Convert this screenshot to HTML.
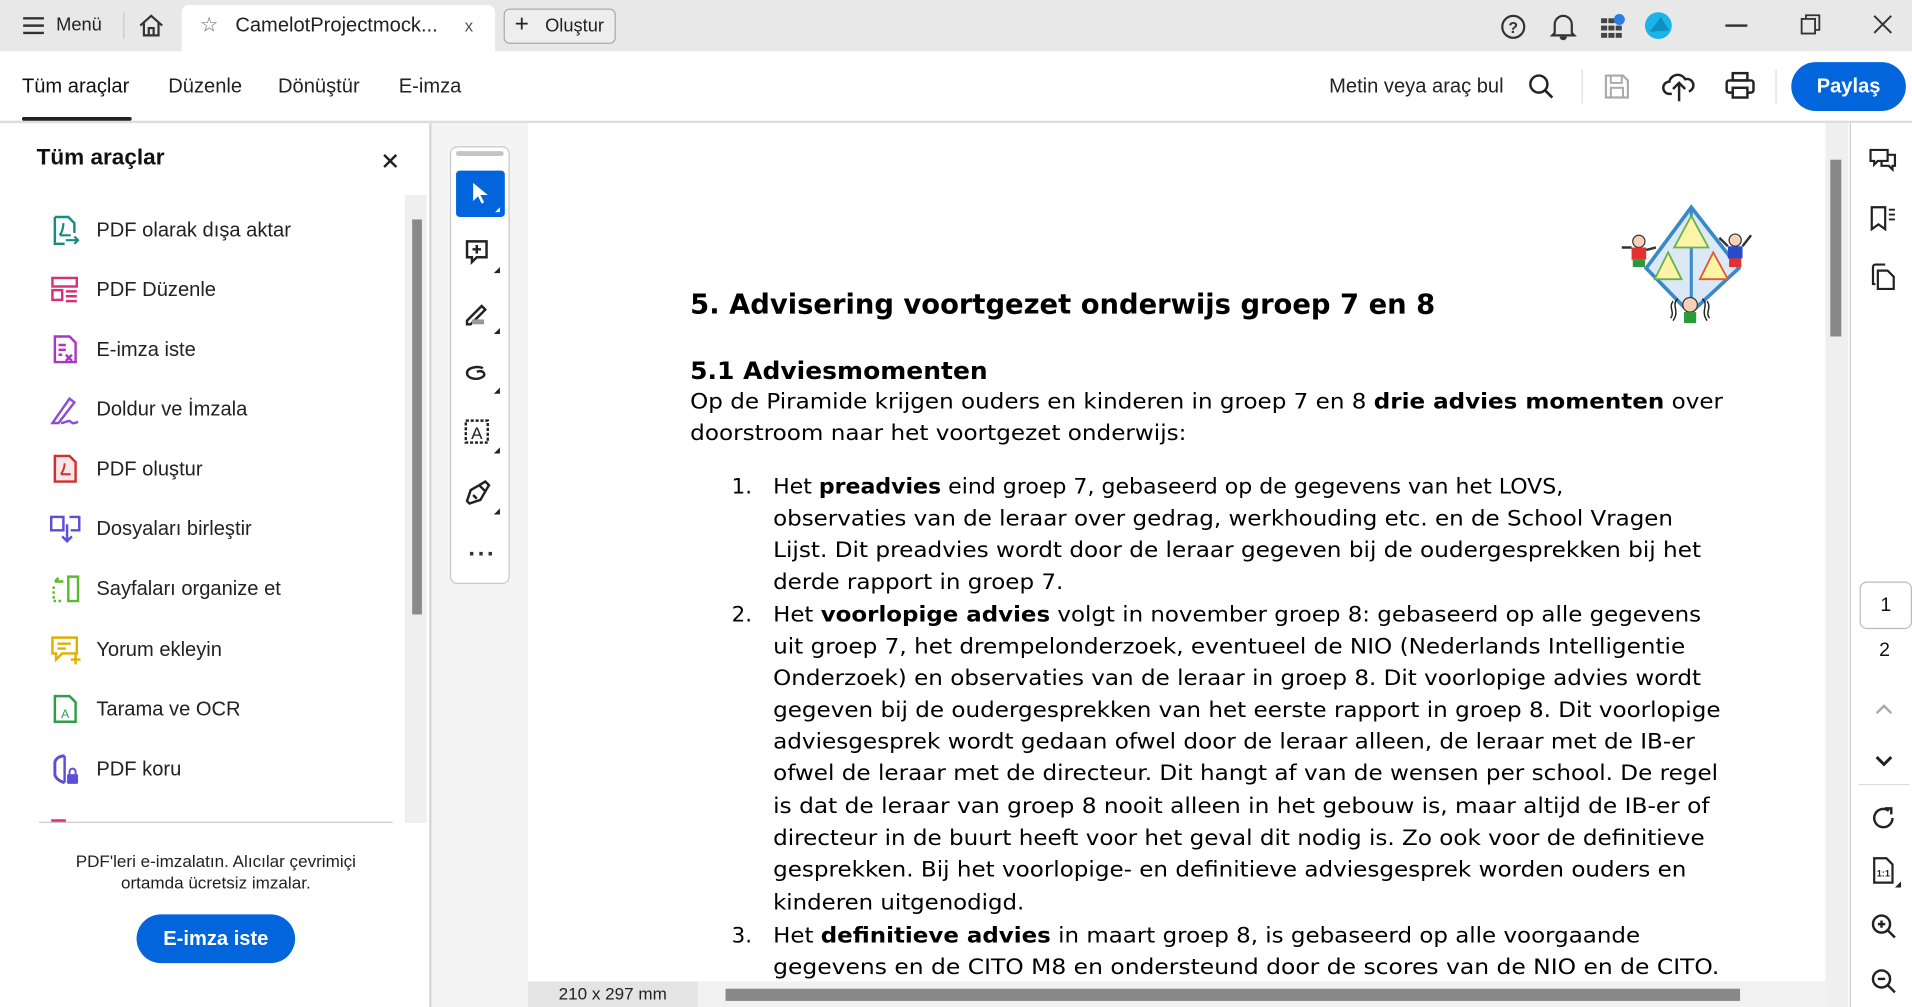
<!DOCTYPE html>
<html><head><meta charset="utf-8"><style>
html,body{margin:0;padding:0;width:1912px;height:1007px;overflow:hidden;background:#fff}
#s{position:absolute;left:0;top:0;width:1568px;height:826px;transform:scale(1.21939,1.21913);transform-origin:0 0;font-family:"Liberation Sans",Arial,sans-serif;color:#222;overflow:hidden}
.a{position:absolute}
.t{font-size:16px;color:#222;white-space:nowrap}
.li{position:absolute;left:40px;width:30px;height:30px}
.lt{position:absolute;left:79px;font-size:16.5px;color:#222;white-space:nowrap}
</style></head><body><div id="s">
<!-- title bar -->
<div class="a" style="left:0;top:0;width:1568px;height:42px;background:#e8e8e8"></div>
<svg class="a" style="left:18px;top:13px" width="20" height="16"><path d="M1 2h17M1 8h17M1 14h17" stroke="#333" stroke-width="2"/></svg>
<div class="a t" style="left:46px;top:12px;font-size:15px">Menü</div>
<div class="a" style="left:101px;top:10px;width:1px;height:22px;background:#c8c8c8"></div>
<svg class="a" style="left:113px;top:11px" width="22" height="20"><path d="M2 10L11 2L20 10M5 8v10h12V8M9 18v-6h4v6" fill="none" stroke="#333" stroke-width="1.8"/></svg>
<div class="a" style="left:149px;top:4px;width:257px;height:38px;background:#fff;border-radius:6px 6px 0 0"></div>
<div class="a t" style="left:164px;top:11px;font-size:17px;color:#666">☆</div>
<div class="a t" style="left:193px;top:12px;font-size:16.5px;color:#222">CamelotProjectmock...</div>
<div class="a t" style="left:381px;top:13px;font-size:14px;color:#555">x</div>
<div class="a" style="left:413px;top:7px;width:90px;height:27px;border:1.5px solid #aaa;border-radius:5px;background:#eee"></div>
<div class="a t" style="left:422px;top:9px;font-size:20px">+</div>
<div class="a t" style="left:447px;top:13px;font-size:15px">Oluştur</div>
<svg class="a" style="left:1230px;top:11px" width="22" height="22"><circle cx="11" cy="11" r="9" fill="none" stroke="#333" stroke-width="1.8"/><text x="11" y="16" font-size="13" text-anchor="middle" font-family="Liberation Sans" font-weight="bold" fill="#333">?</text></svg>
<svg class="a" style="left:1271px;top:10px" width="22" height="24"><path d="M4 17V10a7 7 0 0 1 14 0v7l2 2H2z" fill="none" stroke="#333" stroke-width="1.8"/><path d="M8 20a3 3 0 0 0 6 0" fill="#333"/></svg>
<svg class="a" style="left:1312px;top:11px" width="22" height="22"><g fill="#444"><rect x="1" y="4" width="5" height="4"/><rect x="7" y="4" width="5" height="4"/><rect x="1" y="10" width="5" height="4"/><rect x="7" y="10" width="5" height="4"/><rect x="13" y="10" width="5" height="4"/><rect x="1" y="16" width="5" height="4"/><rect x="7" y="16" width="5" height="4"/><rect x="13" y="16" width="5" height="4"/></g><circle cx="16" cy="5" r="4.5" fill="#2a7de1"/></svg>
<svg class="a" style="left:1348px;top:9px" width="24" height="24"><circle cx="12" cy="12" r="11" fill="#1bb4e8"/><path d="M5 17L14 5L21 16z" fill="#0e8fc4"/></svg>
<div class="a" style="left:1415px;top:20px;width:18px;height:2px;background:#333"></div>
<svg class="a" style="left:1476px;top:11px" width="18" height="18"><rect x="1.5" y="4.5" width="11" height="12" fill="none" stroke="#333" stroke-width="1.5"/><path d="M5 4.5V1.5h11v12h-3.5" fill="none" stroke="#333" stroke-width="1.5"/></svg>
<svg class="a" style="left:1536px;top:12px" width="16" height="16"><path d="M1 1L15 15M15 1L1 15" stroke="#333" stroke-width="1.6"/></svg>
<!-- toolbar -->
<div class="a" style="left:0;top:99px;width:1568px;height:2px;background:#ddd"></div>
<div class="a t" style="left:18px;top:62px;font-size:16.5px;color:#111">Tüm araçlar</div>
<div class="a" style="left:18px;top:96px;width:90px;height:3px;background:#222;border-radius:2px"></div>
<div class="a t" style="left:138px;top:62px;font-size:16.5px">Düzenle</div>
<div class="a t" style="left:228px;top:62px;font-size:16.5px">Dönüştür</div>
<div class="a t" style="left:327px;top:62px;font-size:16.5px">E-imza</div>
<div class="a t" style="left:1090px;top:62px;font-size:16.5px">Metin veya araç bul</div>
<svg class="a" style="left:1253px;top:60px" width="22" height="22"><circle cx="9" cy="9" r="7" fill="none" stroke="#222" stroke-width="2"/><path d="M14 14l6 6" stroke="#222" stroke-width="2.2"/></svg>
<div class="a" style="left:1297px;top:57px;width:1px;height:28px;background:#ddd"></div>
<svg class="a" style="left:1315px;top:60px" width="22" height="22"><path d="M2 2h14l4 4v14H2z" fill="none" stroke="#aaa" stroke-width="1.8"/><rect x="6" y="2" width="9" height="6" fill="none" stroke="#aaa" stroke-width="1.6"/><rect x="6" y="12" width="10" height="8" fill="none" stroke="#aaa" stroke-width="1.6"/></svg>
<svg class="a" style="left:1363px;top:57px" width="28" height="28"><path d="M8 20H6a5 5 0 0 1 0-10 7 7 0 0 1 13-2 5 5 0 0 1 3 10" fill="none" stroke="#222" stroke-width="2"/><path d="M14 26V12M9 16l5-5 5 5" fill="none" stroke="#222" stroke-width="2"/></svg>
<svg class="a" style="left:1414px;top:58px" width="26" height="26"><rect x="7" y="2" width="12" height="6" fill="none" stroke="#222" stroke-width="2"/><rect x="2" y="8" width="22" height="10" rx="2" fill="none" stroke="#222" stroke-width="2"/><rect x="7" y="14" width="12" height="8" fill="#fff" stroke="#222" stroke-width="2"/></svg>
<div class="a" style="left:1456px;top:57px;width:1px;height:28px;background:#ddd"></div>
<div class="a" style="left:1469px;top:51px;width:94px;height:40px;background:#0265dc;border-radius:20px;color:#fff;font-weight:bold;font-size:16.5px;text-align:center;line-height:40px">Paylaş</div>
<!-- left panel -->
<div class="a" style="left:352px;top:101px;width:2px;height:725px;background:#d5d5d5"></div>
<div class="a" style="left:30px;top:118px;font-size:18.5px;font-weight:bold;color:#111;white-space:nowrap">Tüm araçlar</div>
<svg class="a" style="left:314px;top:126px" width="12" height="12"><path d="M1 1L11 11M11 1L1 11" stroke="#222" stroke-width="2"/></svg>
<div class="a" style="left:332px;top:160px;width:18px;height:515px;background:#efefef"></div>
<div class="a" style="left:338px;top:180px;width:8px;height:324px;background:#8a8a8a"></div>
<svg class="li" style="top:175px" viewBox="0 0 30 30"><path d="M5 3h11l5 5v8M5 3v22h8" fill="none" stroke="#1a8a84" stroke-width="2"/><path d="M9 18c2-3 3-7 3-10M9 18h9M14 22h10M21 19l3 3-3 3" fill="none" stroke="#1a8a84" stroke-width="1.8"/></svg>
<div class="lt" style="top:180px">PDF olarak dışa aktar</div>
<svg class="li" style="top:224px" viewBox="0 0 30 30"><g fill="none" stroke="#d4317b" stroke-width="2"><rect x="3" y="4" width="20" height="7"/><rect x="3" y="14" width="8" height="8"/><path d="M14 15h9M14 19h9M14 23h9"/></g></svg>
<div class="lt" style="top:229px">PDF Düzenle</div>
<svg class="li" style="top:273px" viewBox="0 0 30 30"><path d="M5 3h12l5 5v16H5z" fill="none" stroke="#a937c4" stroke-width="2"/><path d="M8 10h6M8 14h6M8 18h3M14 18l5 5M19 18l-5 5" stroke="#a937c4" stroke-width="2"/></svg>
<div class="lt" style="top:278px">E-imza iste</div>
<svg class="li" style="top:322px" viewBox="0 0 30 30"><path d="M3 25L17 5l4 3L8 25zM10 25c4 0 6-3 8-1s3 1 6 0" fill="none" stroke="#8a4fd9" stroke-width="2"/></svg>
<div class="lt" style="top:327px">Doldur ve İmzala</div>
<svg class="li" style="top:371px" viewBox="0 0 30 30"><path d="M5 3h12l5 5v16H5z" fill="#fbe7e7" stroke="#d32f2f" stroke-width="2"/><path d="M10 18c2-3 3-6 3-9M10 18h8" fill="none" stroke="#d32f2f" stroke-width="1.6"/></svg>
<div class="lt" style="top:376px">PDF oluştur</div>
<svg class="li" style="top:420px" viewBox="0 0 30 30"><g fill="none" stroke="#5a4fd6" stroke-width="2"><rect x="2" y="4" width="10" height="11"/><path d="M17 4h8v11h-7M15 10v14M11 20l4 4 4-4"/></g></svg>
<div class="lt" style="top:425px">Dosyaları birleştir</div>
<svg class="li" style="top:469px" viewBox="0 0 30 30"><g fill="none" stroke="#5cb82e" stroke-width="2"><rect x="16" y="4" width="8" height="20"/><path d="M4 12v12h8" stroke-dasharray="2 2"/><path d="M5 8h7M5 8l3-3"/></g></svg>
<div class="lt" style="top:474px">Sayfaları organize et</div>
<svg class="li" style="top:519px" viewBox="0 0 30 30"><g fill="none" stroke="#e0b000" stroke-width="2"><path d="M3 4h20v13H11l-5 5v-5H3z"/><path d="M7 9h11M7 13h7M22 17v9M18 22h8"/></g></svg>
<div class="lt" style="top:524px">Yorum ekleyin</div>
<svg class="li" style="top:568px" viewBox="0 0 30 30"><path d="M5 3h12l5 5v16H5z" fill="none" stroke="#2e9e4a" stroke-width="2"/><text x="13.5" y="21" font-size="10" text-anchor="middle" fill="#2e9e4a" font-family="Liberation Sans">A</text></svg>
<div class="lt" style="top:573px">Tarama ve OCR</div>
<svg class="li" style="top:617px" viewBox="0 0 30 30"><path d="M13 3C8 3 5 6 5 9v9c0 3 4 6 8 7" fill="none" stroke="#5a4fd6" stroke-width="2.4"/><path d="M13 3v22" stroke="#5a4fd6" stroke-width="2"/><rect x="15" y="18" width="9" height="8" rx="1" fill="#5a4fd6"/><path d="M17 18v-2a2.5 2.5 0 0 1 5 0v2" fill="none" stroke="#5a4fd6" stroke-width="1.6"/></svg>
<div class="lt" style="top:622px">PDF koru</div>
<div class="a" style="left:42px;top:672px;width:12px;height:3px;background:#d4317b"></div>
<div class="a" style="left:32px;top:674px;width:290px;height:1px;background:#ccc"></div>
<div class="a" style="left:47px;top:697px;width:260px;text-align:center;font-size:14px;line-height:18px;color:#222">PDF'leri e-imzalatın. Alıcılar çevrimiçi ortamda ücretsiz imzalar.</div>
<div class="a" style="left:112px;top:750px;width:130px;height:40px;background:#0265dc;border-radius:20px;color:#fff;font-weight:bold;font-size:16.5px;text-align:center;line-height:40px">E-imza iste</div>
<!-- tool strip area -->
<div class="a" style="left:354px;top:101px;width:79px;height:725px;background:#f4f4f4"></div>
<div class="a" style="left:369px;top:120px;width:47px;height:357px;background:#fff;border:1.5px solid #c8c8c8;border-radius:6px"></div>
<div class="a" style="left:374px;top:124px;width:39px;height:4px;background:#c4c4c4;border-radius:2px"></div>
<div class="a" style="left:374px;top:140px;width:40px;height:38px;background:#0265dc;border-radius:3px"></div>
<svg class="a" style="left:374px;top:140px" width="40" height="38"><path d="M14 10v15l4-4 3 6 2-1-3-6h6z" fill="#fff"/><path d="M36 30v4h-4z" fill="#fff"/></svg>
<svg class="a" style="left:374px;top:190px" width="40" height="40"><path d="M9 8h16v13H17l-4 4v-4H9z" fill="none" stroke="#222" stroke-width="2"/><path d="M17 11v7M13.5 14.5h7" stroke="#222" stroke-width="2"/><path d="M36 29v5h-5z" fill="#222"/></svg>
<svg class="a" style="left:374px;top:240px" width="40" height="40"><path d="M9 23l12-12 3 3-12 12H9z" fill="none" stroke="#222" stroke-width="2"/><rect x="13" y="22" width="10" height="4" fill="#999"/><path d="M36 29v5h-5z" fill="#222"/></svg>
<svg class="a" style="left:374px;top:289px" width="40" height="40"><path d="M22 13c-3-2-13-1-13 4s9 6 13 3c3-2 0-6-5-4" fill="none" stroke="#222" stroke-width="2"/><path d="M36 29v5h-5z" fill="#222"/></svg>
<svg class="a" style="left:374px;top:338px" width="40" height="40"><rect x="8" y="7" width="18" height="18" fill="none" stroke="#222" stroke-width="2" stroke-dasharray="2.5 1.5"/><text x="17" y="22" font-size="14" text-anchor="middle" font-family="Liberation Sans" fill="#222">A</text><path d="M36 29v5h-5z" fill="#222"/></svg>
<svg class="a" style="left:374px;top:388px" width="40" height="40"><path d="M9 23l3-9 7-4 5 5-4 7-9 3zM14 18l3 3M19 10l5-3 3 3-3 5" fill="none" stroke="#222" stroke-width="2"/><path d="M36 29v5h-5z" fill="#222"/></svg>
<div class="a" style="left:384px;top:444px;font-size:20px;font-weight:bold;color:#333;letter-spacing:1px">···</div>
<!-- document -->
<div class="a" style="left:433px;top:101px;width:1064px;height:704px;background:#fff"></div>
<svg class="a" style="left:1326px;top:165px" width="118" height="110" viewBox="0 0 118 110">
<path d="M61 5L24 55L60 92L100 55z" fill="#dbe9f6" stroke="#3a88c8" stroke-width="3"/>
<path d="M61 5V92" stroke="#3a88c8" stroke-width="2.5"/>
<path d="M61 12L47 38H75z" fill="#fdf4a8" stroke="#6cb04a" stroke-width="1.5"/>
<path d="M42 42L31 64H53z" fill="#fdf4a8" stroke="#6cb04a" stroke-width="1.5"/>
<path d="M79 42L68 64H91z" fill="#fdf4a8" stroke="#e25a2a" stroke-width="1.5"/>
<circle cx="18" cy="33" r="5" fill="#f8d0b8" stroke="#333"/><rect x="12" y="38" width="12" height="10" fill="#e53030"/><rect x="13" y="48" width="10" height="6" fill="#2a9a3a"/><path d="M4 38h8M24 40l8-2" stroke="#333" stroke-width="2"/>
<circle cx="97" cy="32" r="5" fill="#f8d0b8" stroke="#333"/><rect x="91" y="37" width="12" height="10" fill="#2a4ac8"/><rect x="92" y="47" width="10" height="7" fill="#e53030"/><path d="M84 30l7 7M110 28l-7 9" stroke="#333" stroke-width="2"/>
<circle cx="60" cy="85" r="6" fill="#f8d0b8" stroke="#333"/><rect x="55" y="91" width="10" height="9" fill="#2a9a3a"/><path d="M50 80c-6 5 2 10-4 18M70 80c6 5-2 10 4 18M46 82c-4 6 2 9-2 14M74 82c4 6-2 9 2 14" fill="none" stroke="#222" stroke-width="1.2"/>
</svg>
<svg class="a" style="left:433px;top:101px" width="1064" height="704" viewBox="433 101 1064 704" font-family="'DejaVu Sans',Verdana,sans-serif" fill="#000">
<text x="566" y="257" font-size="22.5" font-weight="bold" textLength="611" lengthAdjust="spacingAndGlyphs">5. Advisering voortgezet onderwijs groep 7 en 8</text>
<text x="566" y="311" font-size="20" font-weight="bold" textLength="244" lengthAdjust="spacingAndGlyphs">5.1 Adviesmomenten</text>
<g font-size="17.5">
<text x="566" y="335" textLength="847" lengthAdjust="spacingAndGlyphs">Op de Piramide krijgen ouders en kinderen in groep 7 en 8 <tspan font-weight="bold">drie advies momenten</tspan> over</text>
<text x="566" y="361" textLength="407" lengthAdjust="spacingAndGlyphs">doorstroom naar het voortgezet onderwijs:</text>
<text x="600" y="405">1.</text>
<text x="634" y="405" textLength="648" lengthAdjust="spacingAndGlyphs">Het <tspan font-weight="bold">preadvies</tspan> eind groep 7, gebaseerd op de gegevens van het LOVS,</text>
<text x="634" y="431" textLength="738" lengthAdjust="spacingAndGlyphs">observaties van de leraar over gedrag, werkhouding etc. en de School Vragen</text>
<text x="634" y="457" textLength="761" lengthAdjust="spacingAndGlyphs">Lijst. Dit preadvies wordt door de leraar gegeven bij de oudergesprekken bij het</text>
<text x="634" y="483" textLength="238" lengthAdjust="spacingAndGlyphs">derde rapport in groep 7.</text>
<text x="600" y="510">2.</text>
<text x="634" y="510" textLength="761" lengthAdjust="spacingAndGlyphs">Het <tspan font-weight="bold">voorlopige advies</tspan> volgt in november groep 8: gebaseerd op alle gegevens</text>
<text x="634" y="536" textLength="748" lengthAdjust="spacingAndGlyphs">uit groep 7, het drempelonderzoek, eventueel de NIO (Nederlands Intelligentie</text>
<text x="634" y="562" textLength="761" lengthAdjust="spacingAndGlyphs">Onderzoek) en observaties van de leraar in groep 8. Dit voorlopige advies wordt</text>
<text x="634" y="588" textLength="777" lengthAdjust="spacingAndGlyphs">gegeven bij de oudergesprekken van het eerste rapport in groep 8. Dit voorlopige</text>
<text x="634" y="614" textLength="756" lengthAdjust="spacingAndGlyphs">adviesgesprek wordt gedaan ofwel door de leraar alleen, de leraar met de IB-er</text>
<text x="634" y="640" textLength="775" lengthAdjust="spacingAndGlyphs">ofwel de leraar met de directeur. Dit hangt af van de wensen per school. De regel</text>
<text x="634" y="667" textLength="768" lengthAdjust="spacingAndGlyphs">is dat de leraar van groep 8 nooit alleen in het gebouw is, maar altijd de IB-er of</text>
<text x="634" y="693" textLength="764" lengthAdjust="spacingAndGlyphs">directeur in de buurt heeft voor het geval dit nodig is. Zo ook voor de definitieve</text>
<text x="634" y="719" textLength="749" lengthAdjust="spacingAndGlyphs">gesprekken. Bij het voorlopige- en definitieve adviesgesprek worden ouders en</text>
<text x="634" y="746" textLength="206" lengthAdjust="spacingAndGlyphs">kinderen uitgenodigd.</text>
<text x="600" y="773">3.</text>
<text x="634" y="773" textLength="711" lengthAdjust="spacingAndGlyphs">Het <tspan font-weight="bold">definitieve advies</tspan> in maart groep 8, is gebaseerd op alle voorgaande</text>
<text x="634" y="799" textLength="776" lengthAdjust="spacingAndGlyphs">gegevens en de CITO M8 en  ondersteund door de scores van de NIO en de CITO.</text>
</g></svg>
<!-- bottom strip -->
<div class="a" style="left:433px;top:805px;width:1064px;height:21px;background:#f1f1f1"></div>
<div class="a" style="left:433px;top:805px;width:139px;height:21px;background:#e4e4e4;font-size:14px;text-align:center;line-height:21px;color:#222">210 x 297 mm</div>
<div class="a" style="left:595px;top:811px;width:832px;height:10px;background:#888"></div>
<!-- doc vertical scrollbar -->
<div class="a" style="left:1497px;top:101px;width:19px;height:725px;background:#efefef"></div>
<div class="a" style="left:1501px;top:131px;width:9px;height:145px;background:#888"></div>
<!-- right rail -->
<div class="a" style="left:1517px;top:101px;width:1px;height:725px;background:#ccc"></div>
<div class="a" style="left:1518px;top:101px;width:50px;height:725px;background:#fff"></div>
<svg class="a" style="left:1532px;top:120px" width="26" height="24"><path d="M2 3h14v9H8l-3 3v-3H2zM16 7h6v9h-2v3l-3-3h-6v-4" fill="none" stroke="#222" stroke-width="1.8"/></svg>
<svg class="a" style="left:1532px;top:167px" width="26" height="24"><path d="M3 3h11v18l-5.5-4L3 21z" fill="none" stroke="#222" stroke-width="1.8"/><path d="M17 5h5M17 9h5M17 13h5" stroke="#222" stroke-width="1.5"/></svg>
<svg class="a" style="left:1532px;top:214px" width="26" height="26"><path d="M6 19H4V5a2 2 0 0 1 2-2h8" fill="none" stroke="#222" stroke-width="1.8"/><path d="M8 8h8l5 5v10H8z" fill="none" stroke="#222" stroke-width="1.8"/></svg>
<div class="a" style="left:1525px;top:477px;width:41px;height:37px;border:1px solid #bbb;border-radius:6px;text-align:center;line-height:37px;font-size:16px;color:#111">1</div>
<div class="a" style="left:1525px;top:525px;width:41px;text-align:center;font-size:16px;color:#111">2</div>
<svg class="a" style="left:1536px;top:576px" width="18" height="12"><path d="M3 9l6-6 6 6" fill="none" stroke="#aaa" stroke-width="2"/></svg>
<svg class="a" style="left:1536px;top:618px" width="18" height="12"><path d="M3 3l6 6 6-6" fill="none" stroke="#222" stroke-width="2.4"/></svg>
<div class="a" style="left:1524px;top:643px;width:42px;height:1px;background:#ddd"></div>
<svg class="a" style="left:1533px;top:659px" width="24" height="24"><path d="M19 12a7.5 7.5 0 1 1-3-6" fill="none" stroke="#222" stroke-width="2"/><path d="M13 4h5v5" fill="none" stroke="#222" stroke-width="2"/></svg>
<svg class="a" style="left:1533px;top:701px" width="28" height="28"><path d="M4 3h10l5 5v15H4z" fill="none" stroke="#222" stroke-width="1.8"/><text x="11.5" y="18" font-size="7.5" text-anchor="middle" font-family="Liberation Sans" font-weight="bold" fill="#222">1:1</text><path d="M26 22v5h-5z" fill="#222"/></svg>
<svg class="a" style="left:1533px;top:748px" width="24" height="24"><circle cx="10" cy="10" r="7" fill="none" stroke="#222" stroke-width="2"/><path d="M15 15l6 6M7 10h6M10 7v6" stroke="#222" stroke-width="2"/></svg>
<svg class="a" style="left:1533px;top:793px" width="24" height="24"><circle cx="10" cy="10" r="7" fill="none" stroke="#222" stroke-width="2"/><path d="M15 15l6 6M7 10h6" stroke="#222" stroke-width="2"/></svg>
</div></body></html>
